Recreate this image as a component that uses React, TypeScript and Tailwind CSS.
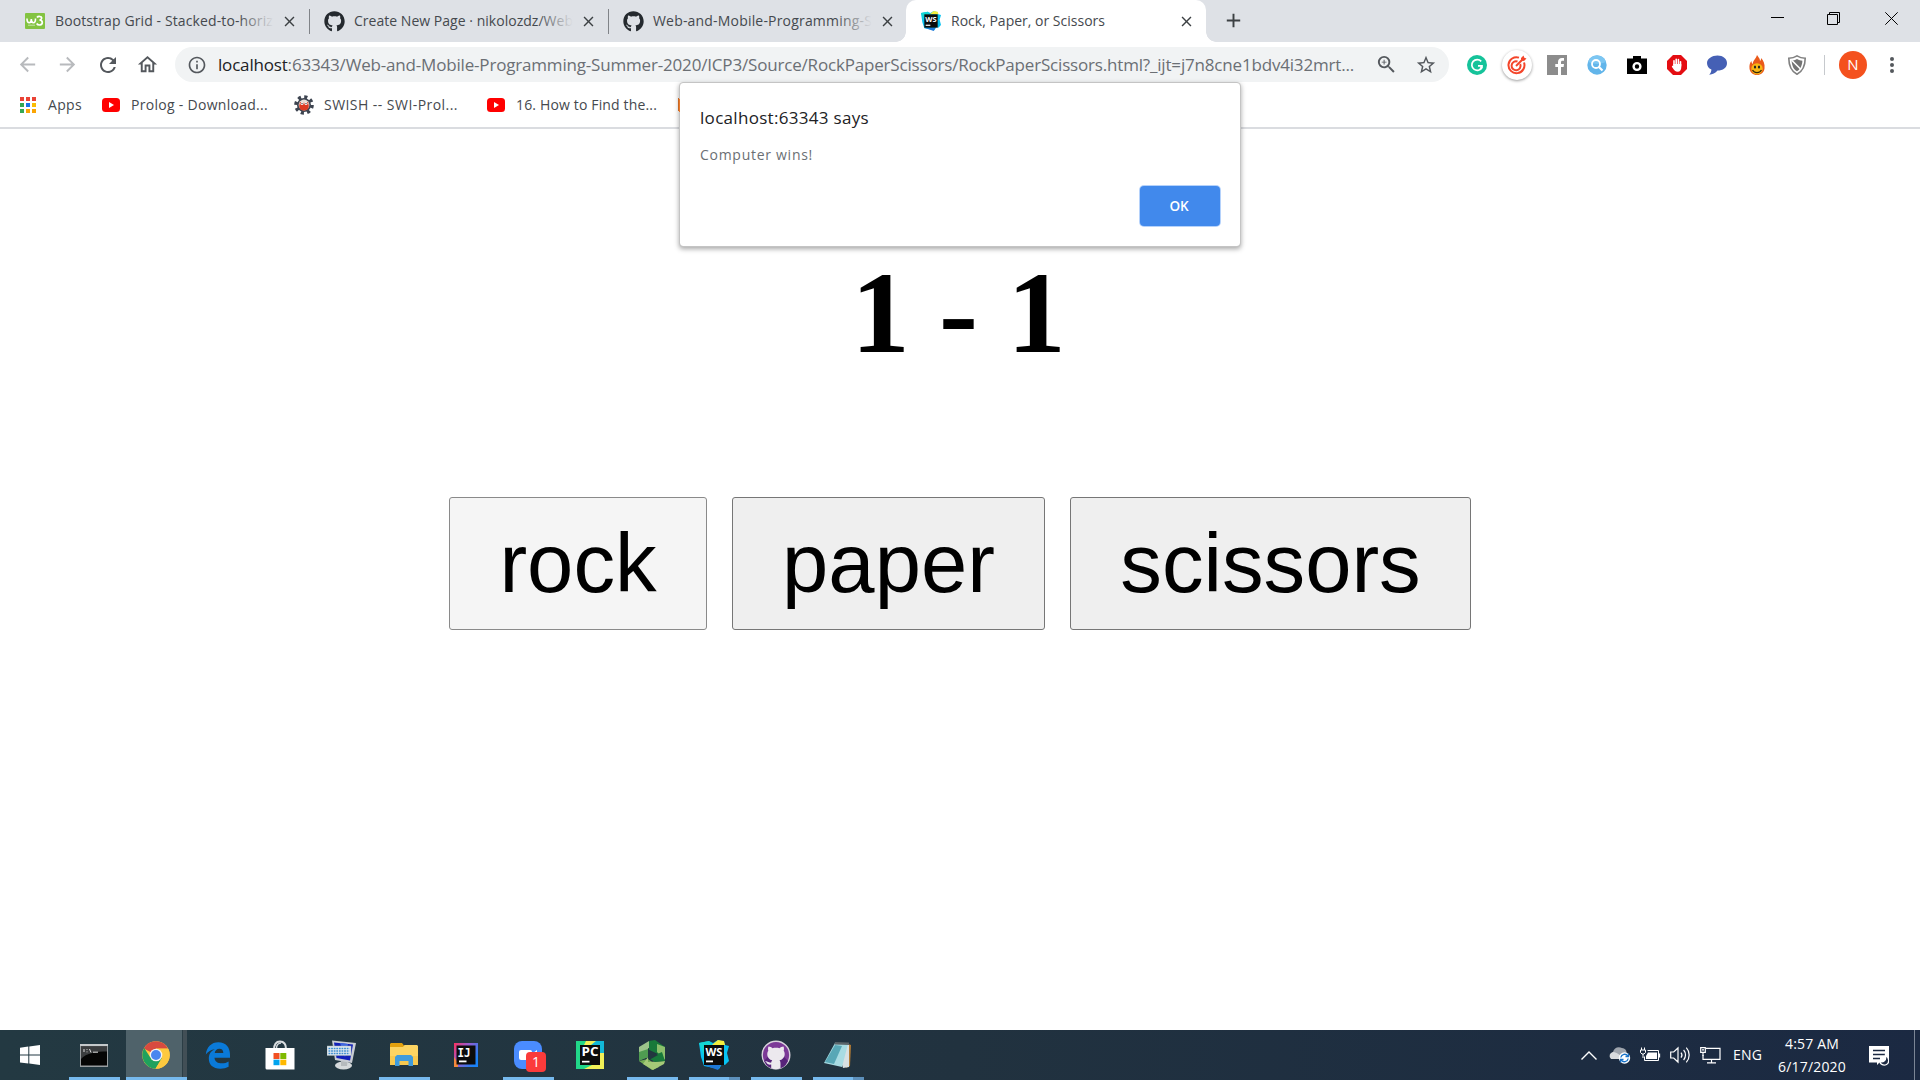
import { useLayoutEffect, useRef, useState, type ReactNode } from "react";
import { FaGithub } from "react-icons/fa";
import {
  MdArrowBack, MdArrowForward, MdRefresh, MdOutlineHome, MdInfoOutline,
  MdZoomIn, MdStarBorder, MdClose, MdAdd,
} from "react-icons/md";

/* Text run tracked to a fixed width. */
const Label = ({ w, className = "", children }: { w: number; className?: string; children: ReactNode }) => {
  const ref = useRef<HTMLSpanElement>(null);
  const [sp, setSp] = useState(0);
  useLayoutEffect(() => {
    const el = ref.current;
    if (!el) return;
    const n = el.textContent?.length ?? 1;
    setSp((w - el.getBoundingClientRect().width) / n);
  }, [w]);
  return (
    <span ref={ref} className={`inline-block whitespace-nowrap ${className}`} style={{ letterSpacing: `${sp}px` }}>
      {children}
    </span>
  );
};

const W3 = () => (
  <svg width="20" height="16" viewBox="0 0 20 16">
    <rect width="20" height="16" rx="1" fill="#83c341" />
    <path d="M2 5.500c0 3 .8 4.200 2.300 4.200S6.300 8.500 6.300 6c0 2.500.7 3.700 2.200 3.700S10.500 8 10.500 5.500" fill="none" stroke="#fff" strokeWidth="1.600" />
    <path d="M12 4.500c1-1.500 5-1.500 4.600.8-.2 1.300-1.200 1.700-2.200 1.700 1.500 0 2.900.6 2.900 2.500 0 3-4.300 3.200-5.600 1" fill="none" stroke="#fff" strokeWidth="1.700" />
    <path d="M3 12.200h7" stroke="#c9e6a8" strokeWidth="1" />
  </svg>
);

const WebStorm = ({ size }: { size: number }) => (
  <svg width={size} height={size} viewBox="0 0 30 30">
    <path d="M0 3l10-2 4 2 5-3 6 2 1 3 4 1-2 7 2 8-4 4-3-1-3 5-15-3L2 17z" fill="#07c3f2" />
    <path d="M5 25l14 5 3-5z" fill="#1e78d8" />
    <path d="M14 4l5-4 6 1 1 4H13z" fill="#f5ee3c" />
    <path d="M0 3l10-2 3 4-8 3v8z" fill="#14d6d2" />
    <rect x="5" y="5" width="20" height="20" fill="#0b0b0b" />
    <text x="15" y="16" textAnchor="middle" fontFamily="Open Sans, sans-serif" fontWeight="700" fontSize="10.500" textLength="17" lengthAdjust="spacingAndGlyphs" fill="#fff">WS</text>
    <rect x="7" y="20.500" width="7" height="1.800" fill="#fff" />
  </svg>
);

type TabProps = { icon: ReactNode; title: string; w: number; fade?: boolean; active?: boolean; last?: boolean };
const tabTitle = "text-[14px] leading-5 text-[#45494e]";

const Tab = ({ icon, title, w, fade, active, last }: TabProps) => (
  <div className={`relative flex h-[42px] shrink-0 items-center ${active ? "w-[300px] rounded-t-[10px] bg-white pl-[15px]" : "w-[299px] pl-[14px]"}`}>
    {active && (
      <>
        <span className="absolute bottom-0 -left-[10px] size-[10px] bg-[radial-gradient(circle_at_0_0,transparent_9.500px,#fff_10px)]" />
        <span className="absolute -right-[10px] bottom-0 size-[10px] bg-[radial-gradient(circle_at_100%_0,transparent_9.500px,#fff_10px)]" />
      </>
    )}
    <span className="flex w-[21px] justify-start">{icon}</span>
    <span className={`relative ml-[9px] flex pb-px ${active ? "w-[220px]" : "w-[219px]"}`}>
      <Label w={w} className={tabTitle}>{title}</Label>
      {fade && <span className="absolute inset-y-0 right-0 w-[36px] bg-gradient-to-r from-transparent to-[#dee1e6]" />}
    </span>
    <MdClose className={`shrink-0 text-[#3c4043] ${active ? "ml-[7px]" : "ml-[7px]"}`} size={17} />
    {!active && !last && <span className="ml-auto h-[25px] w-px bg-[#808388]" />}
  </div>
);

const Extension = ({ children }: { children: ReactNode }) => (
  <span className="flex w-10 items-center justify-center">{children}</span>
);

const GrammarlyIcon = () => (
  <svg width="20" height="20" viewBox="0 0 20 20">
    <circle cx="10" cy="10" r="10" fill="#15c39a" />
    <path d="M14.200 6.300A5.400 5.400 0 1 0 15 12.500v-1.700h-4M15 10.800l-1.700 3.200" fill="none" stroke="#fff" strokeWidth="1.700" />
  </svg>
);
const TargetIcon = () => (
  <span className="flex size-[30px] items-center justify-center rounded-full bg-white shadow-[0_1px_3px_rgba(0,0,0,0.4)]">
    <svg width="20" height="20" viewBox="0 0 20 20" fill="none" stroke="#f4452a" strokeWidth="2">
      <path d="M17 7.500A8 8 0 1 1 12 2.600" />
      <path d="M13.200 9A4.500 4.500 0 1 1 10.500 6.500" />
      <path d="M9 11l7-7" />
      <path d="M14 5.500V3l2.500-2.500.8 2.200 2.200.8L17 6z" fill="#f4452a" stroke="none" />
    </svg>
  </span>
);
const FacebookIcon = () => (
  <svg width="20" height="20" viewBox="0 0 20 20">
    <rect width="20" height="20" fill="#8c8c8c" />
    <path d="M11 20v-8H8.300V9H11V7c0-2.800 1.600-4 4-4h2v2.800h-1.500c-1.200 0-1.500.6-1.500 1.600V9h3l-.4 3H14v8z" fill="#fff" />
  </svg>
);
const SearchExtIcon = () => (
  <svg width="20" height="20" viewBox="0 0 20 20">
    <circle cx="10" cy="10" r="9.700" fill="#62b5ea" />
    <path d="M1 7a9.500 9.500 0 0 1 18 0c-5 2-10 3-18 0z" fill="#7cc6f2" />
    <circle cx="9" cy="9" r="4" fill="none" stroke="#fff" strokeWidth="1.800" />
    <path d="M12 12l3.500 3.500" stroke="#fff" strokeWidth="2.200" />
  </svg>
);
const CameraIcon = () => (
  <svg width="20" height="20" viewBox="0 0 20 20">
    <path d="M6 1h8v2.500h6v15.500H0V3.500h6z" fill="#000" />
    <circle cx="10" cy="11.500" r="3.400" fill="none" stroke="#fff" strokeWidth="2.400" />
  </svg>
);
const AdblockIcon = () => (
  <svg width="20" height="20" viewBox="0 0 20 20">
    <path d="M6 0h8l6 6v8l-6 6H6l-6-6V6z" fill="#e40d12" />
    <path d="M7 10V5.700M9.200 9V4.200M11.400 9V4.600M13.500 11V6.800" stroke="#fff" strokeWidth="1.600" strokeLinecap="round" />
    <path d="M6.200 9h8.100v3c0 3-1.300 4.800-3.600 4.800-2.400 0-3.300-1.600-5.700-4.900-.4-.7.400-1.400 1.200-.9z" fill="#fff" />
  </svg>
);
const BubbleIcon = () => (
  <svg width="20" height="20" viewBox="0 0 20 20">
    <path d="M10.500.4C16 .4 20 3.600 20 8c0 4.600-4 7.600-9.500 7.600-2 2.600-5 4-8.300 4.200 1.500-1.600 2.200-3.400 2.200-5.200C1.600 13.200 0 11 0 8 0 3.600 5 .4 10.500.4z" fill="#4560b5" />
  </svg>
);
const FlameIcon = () => (
  <svg width="20" height="20" viewBox="0 0 20 20">
    <path d="M10 0c1 2 3 3 3 6 .7-.5 1.200-1.500 1-3 2.500 2.500 4 6 3.500 10.500C17 17.500 14 20 10 20s-7-2.500-7.500-6.500C2.200 10 3 7.500 4.500 6c0 1.500.4 2.300 1.200 3C6 5 9 4 10 0z" fill="#ea5a1a" />
    <ellipse cx="10" cy="13.800" rx="5.700" ry="5.600" fill="#f9b715" />
    <ellipse cx="8" cy="12" rx="1.100" ry="1.500" fill="#222" />
    <ellipse cx="12" cy="12" rx="1.100" ry="1.500" fill="#222" />
    <path d="M5.500 15c2 3.500 7 3.500 9 0" fill="none" stroke="#33240a" strokeWidth="1.200" />
  </svg>
);
const ShieldIcon = () => (
  <svg width="20" height="20" viewBox="0 0 20 20">
    <path d="M10 .8c2.500 1.600 5 2.300 8.200 2.400C18.200 11 16 16 10 19.300 4 16 1.800 11 1.800 3.200 5 3.100 7.500 2.400 10 .8z" fill="#fff" stroke="#808080" strokeWidth="1.600" />
    <path d="M10 4c2 1 3.500 1.500 5.400 1.700C15 11 13.500 14 10 16.300 6.500 14 5 11 4.600 5.700 6.500 5.500 8 5 10 4z" fill="#737373" />
    <path d="M5 5.500l9 9" stroke="#fff" strokeWidth="1.600" />
  </svg>
);

const appColors = [
  "bg-[#ea4335]", "bg-[#ea4335]", "bg-[#ea4335]",
  "bg-[#34a853]", "bg-[#1a73e8]", "bg-[#fbbc04]",
  "bg-[#34a853]", "bg-[#fba504]", "bg-[#fba504]",
];

const SwishIcon = () => (
  <svg width="20" height="20" viewBox="0 0 20 20">
    <circle cx="10" cy="10" r="8" fill="none" stroke="#3d4450" strokeWidth="3.600" strokeDasharray="3.100 3.180" />
    <circle cx="10" cy="10" r="7" fill="#3d4450" />
    <circle cx="10" cy="10" r="5.400" fill="#e9dfd6" />
    <path d="M6 7l4 1 4-1 .8 4c0 3-2 4.500-4.800 4.500S5.200 14 5.200 11z" fill="#dc3a22" />
    <circle cx="8" cy="8.600" r="1.500" fill="#fff" /><circle cx="12" cy="8.600" r="1.500" fill="#fff" />
    <circle cx="8" cy="8.600" r=".7" fill="#222" /><circle cx="12" cy="8.600" r=".7" fill="#222" />
  </svg>
);

const YouTube = () => (
  <svg width="18" height="14" viewBox="0 0 18 14">
    <rect width="18" height="14" rx="3.500" fill="#f00" />
    <path d="M7 4l5 3-5 3z" fill="#fff" />
  </svg>
);

const bookmarkText = "text-[14px] leading-5 text-[#45494e]";

/* Taskbar drawings */
const StartIcon = () => (
  <svg width="20" height="20" viewBox="0 0 20 20" fill="#fff">
    <path d="M0 2.700L8.300 1.600v8H0zM9.300 1.400L20 0v9.600H9.300zM0 10.500h8.300v8L0 17.400zM9.300 10.500H20V20L9.300 18.600z" />
  </svg>
);
const CmdIcon = () => (
  <svg width="28" height="23" viewBox="0 0 28 23">
    <rect width="28" height="23" fill="#989da0" />
    <rect y="0" width="28" height="2" fill="#c5c9cb" />
    <rect x="1" y="2.500" width="26" height="19" fill="#050505" />
    <path d="M1 2.500h26v5C17 7.500 6 9 1 15z" fill="#3b3d3f" />
    <path d="M4 5v3M7 5.200v.8M7 7.500v.8M9.500 5l1.500 3.500M13 8.200h5" stroke="#ddd" strokeWidth="1" fill="none" />
  </svg>
);
const ChromeIcon = () => (
  <svg width="28" height="28" viewBox="0 0 28 28">
    <circle cx="14" cy="14" r="13.800" fill="#fdc93f" />
    <path d="M14 14L1.800 7.500A13.800 13.800 0 0 1 26 7.500H14z" fill="#d84a3f" />
    <path d="M2.200 7A13.800 13.800 0 0 0 13.500 27.800L20 17 14 14 8 16z" fill="#1fa15d" />
    <path d="M20 17l-6.500 10.800A13.800 13.800 0 0 0 26.200 7.800H14z" fill="#fdc93f" />
    <circle cx="14" cy="14" r="6.300" fill="#f4f4f4" />
    <circle cx="14" cy="14" r="5" fill="#4a86ef" />
  </svg>
);
const EdgeIcon = () => (
  <svg width="26" height="27" viewBox="0 0 26 27">
    <path d="M.8 12.500C1.600 5 6.600.2 13.300.2 21 .2 25 5.500 25 12.500v3.200H9.500c.2 4 3.400 5.600 7.300 5.600 2.600 0 5-.7 6.800-1.900v5.300c-2.200 1.300-5.200 2-8.300 2C8 26.700 3.800 22.400 3.800 16.400c0-4.200 2.200-7.600 6-9.200C6 7.600 3 9.400.8 12.500zM9.700 11h8.600c0-2.800-1.300-4.300-4-4.300-2.500 0-4.200 1.700-4.600 4.300z" fill="#0a7ad9" />
  </svg>
);
const StoreIcon = () => (
  <svg width="30" height="30" viewBox="0 0 30 30">
    <path d="M9 10C9 4 11.500 1.500 15 1.500S21 4 21 9" fill="none" stroke="#d9dde0" strokeWidth="2" />
    <path d="M11.500 8c0-3 2-5 4.500-5" fill="none" stroke="#d9dde0" strokeWidth="1.400" />
    <path d="M.5 8h29v21.500H2a1.500 1.500 0 0 1-1.500-1.500z" fill="#fff" />
    <rect x="8.500" y="13" width="6" height="6" fill="#f25022" /><rect x="15.300" y="13" width="6" height="6" fill="#7fba00" />
    <rect x="8.500" y="19.700" width="6" height="5.500" fill="#00a4ef" /><rect x="15.300" y="19.700" width="6" height="5.500" fill="#ffb900" />
  </svg>
);
const KeyboardPcIcon = () => (
  <svg width="30" height="30" viewBox="0 0 30 30">
    <ellipse cx="16.500" cy="25.500" rx="8.500" ry="4" fill="#d5d9db" />
    <path d="M14 18h7l-1 8h-6z" fill="#b5babd" />
    <path d="M5 .5L29 3l-4 20L8 20z" fill="#c9cdd4" />
    <path d="M7 2.500L26 4.500l-3 16L9.500 18z" fill="#1320b8" />
    <path d="M13 3l8 1-3 13z" fill="#3f68e4" />
    <rect x="0" y="6" width="24" height="9.500" fill="#e3eaf0" stroke="#9aa" strokeWidth=".5" />
    <path d="M1.500 8.500h21M1.500 11h21M1.500 13.500h21" stroke="#3e8ed0" strokeWidth="1.600" strokeDasharray="1.800 .8" />
  </svg>
);
const ExplorerIcon = () => (
  <svg width="28" height="24" viewBox="0 0 28 24">
    <path d="M1 0h11l2 2.500V6H0V1z" fill="#e3a10e" />
    <path d="M0 4h13l1.500-2H27l1 1v19H0z" fill="#fcd462" />
    <path d="M0 13h28v9H0z" fill="#f7c94f" />
    <path d="M5 23V14l2-2h14l2 2v9h-4.500v-5h-9v5z" fill="#3f9bdc" />
  </svg>
);
const IntelliJIcon = () => (
  <svg width="24" height="24" viewBox="0 0 24 24">
    <defs><linearGradient id="ij" x1="0" y1="0" x2="1" y2=".6"><stop offset="0" stopColor="#fc315d" /><stop offset=".45" stopColor="#9a5bd0" /><stop offset="1" stopColor="#1a82f7" /></linearGradient></defs>
    <rect width="24" height="24" fill="url(#ij)" />
    <path d="M0 14l4 6v4H0z" fill="#f6893c" />
    <rect x="2.500" y="2.500" width="19" height="19" fill="#0c0c0c" />
    <text x="3.500" y="13.500" fontFamily="DejaVu Sans Mono, monospace" fontWeight="700" fontSize="12" textLength="13" lengthAdjust="spacingAndGlyphs" fill="#fff">IJ</text>
    <rect x="5" y="17.500" width="7.500" height="1.800" fill="#fff" />
  </svg>
);
const ZoomIcon = () => (
  <span className="relative flex">
    <svg width="28" height="28" viewBox="0 0 28 28">
      <rect width="28" height="28" rx="8" fill="#4a8cff" />
      <rect x="5" y="9" width="13" height="10" rx="2" fill="#fff" />
      <path d="M19 12l4-3v10l-4-3z" fill="#fff" />
    </svg>
    <span className="absolute -right-[4px] -bottom-[3px] flex size-[20px] items-center justify-center rounded-[4px] bg-[#fb3b3b] text-[14px] leading-none text-white">1</span>
  </span>
);
const PyCharmIcon = () => (
  <svg width="28" height="28" viewBox="0 0 28 28">
    <rect width="28" height="28" fill="#21d789" />
    <path d="M12 0h16v16z" fill="#12b8d8" />
    <path d="M10 0h10l-5 4H8zM28 12v16H8l12-6 4-10z" fill="#f2f057" />
    <rect x="4" y="4" width="20" height="20" fill="#0c0c0c" />
    <text x="5.500" y="15" fontFamily="Open Sans, sans-serif" fontWeight="700" fontSize="11.500" textLength="17" lengthAdjust="spacingAndGlyphs" fill="#fff">PC</text>
    <rect x="6" y="19.800" width="7.500" height="1.700" fill="#fff" />
  </svg>
);
const HexIcon = () => (
  <svg width="28" height="30" viewBox="0 0 28 30">
    <path d="M11 1L1 7v13l9-3V8l8 3z" fill="#9cc48a" />
    <path d="M1 12v9l9-4V9z" fill="#4f9b51" />
    <path d="M11 1l6-1 10 7v14l-7-7-9-4z" fill="#18793a" />
    <path d="M19 4l8 3v13l-8-8z" fill="#8cbf6c" />
    <path d="M1 21l13 9 7-3-11-8z" fill="#75ad55" />
    <path d="M10 17v5l17-1-1 3-11 6-10-6z" fill="#a5c977" />
    <path d="M10 18l14-6 3 9-10 1z" fill="#18793a" />
    <path d="M11 10l9 5-9 5z" fill="#22373f" />
  </svg>
);
const GitHubDesktopIcon = () => (
  <svg width="30" height="30" viewBox="0 0 30 30">
    <circle cx="15" cy="15" r="13.800" fill="#7c3a97" stroke="#d9d4dd" strokeWidth="1.400" />
    <path d="M3 21a13 13 0 0 0 24 0L15 8z" fill="#57247a" />
    <path d="M7.500 6.500c1.500 0 3 .8 4 1.700 2-.5 5-.5 7 0 1-.9 2.500-1.700 4-1.700.6 1.500.6 3 .2 4.200C24.500 13 24.300 19 18.500 20.300c.8 1 1 2 1 3.700v4.300c-3 1.200-6.500 1.200-9.300 0v-3.800c-4 .8-4-2-6-3 2-.8 3.500 1.700 6 1 .1-1 .5-1.700 1-2.200C5.700 19 5.500 13 7.300 10.700c-.4-1.200-.4-2.700.2-4.200z" fill="#ece9ee" />
  </svg>
);
const NotepadIcon = () => (
  <svg width="28" height="28" viewBox="0 0 28 28">
    <path d="M24 3l3 1-1 21-4 2z" fill="#b27b35" />
    <path d="M12 3l13-1v24l-6 1z" fill="#d8e0e2" />
    <path d="M11 2l13 1-6 23-18-4z" fill="#a8dbe2" />
    <path d="M11 4l7 1-8 18-9-2z" fill="#58a7b6" />
    <path d="M11 1l14 .5v2.500L10.500 3.500z" fill="#5b656a" />
  </svg>
);

type Task = { icon: ReactNode; open?: boolean; multi?: boolean; active?: boolean };
const tasks: Task[] = [
  { icon: <CmdIcon />, open: true },
  { icon: <ChromeIcon />, active: true },
  { icon: <EdgeIcon /> },
  { icon: <StoreIcon /> },
  { icon: <KeyboardPcIcon /> },
  { icon: <ExplorerIcon />, open: true },
  { icon: <IntelliJIcon /> },
  { icon: <ZoomIcon />, open: true },
  { icon: <PyCharmIcon /> },
  { icon: <HexIcon />, open: true },
  { icon: <WebStorm size={30} />, open: true, multi: true },
  { icon: <GitHubDesktopIcon />, open: true },
  { icon: <NotepadIcon />, open: true, multi: true },
];

const TaskItem = ({ icon, open, multi, active }: Task) => (
  <div className="relative flex h-[50px] w-[62px] shrink-0 items-center justify-center">
    {active && (
      <span className="absolute inset-y-0 left-[2px] flex w-[61px] border-b-[3px] border-[#76b9ed]">
        <span className="flex-1 bg-[#4f626a]" />
        <span className="w-px bg-[#2b3d45]" />
        <span className="w-[4px] bg-[#424f56]" />
      </span>
    )}
    <span className="relative flex pl-[2px]">{icon}</span>
    {open && (
      <span className="absolute bottom-0 left-[7px] flex h-[3px] w-[51px] bg-[#76b9ed]">
        {multi && <span className="ml-auto w-[11px] bg-[#5d90bb]" />}
      </span>
    )}
  </div>
);

const CloudIcon = () => (
  <svg width="22" height="20" viewBox="0 0 22 20">
    <path d="M4 14a4 4 0 0 1 0-7c1-4 5-6 9-4 3 .2 4.500 2 4.500 4.500V14z" fill="#9fa5ad" />
    <path d="M2 14a4 4 0 0 1 2-7c4 0 8 4 12 7z" fill="#d8dbde" />
    <circle cx="15.500" cy="13" r="5.700" fill="#fff" />
    <path d="M11.800 12.500a3.900 3.900 0 0 1 7-1.600M19.200 13.500a3.900 3.900 0 0 1-7 1.600M19.500 8.500v3h-3M11.500 17.500v-3h3" fill="none" stroke="#1a73c8" strokeWidth="1.300" />
  </svg>
);
const BatteryIcon = () => (
  <svg width="21" height="16" viewBox="0 0 21 16">
    <path d="M7.500 3.500H18.500v10H4.500V9.500" fill="none" stroke="#fff" strokeWidth="1" />
    <path d="M8 5.500h9v6.500H6V9z" fill="#fff" />
    <path d="M19.500 6.500v4" stroke="#fff" strokeWidth="1.300" />
    <path d="M1.500.5v2.500M4.500.5v2.500M3 7v4" stroke="#fff" strokeWidth="1" />
    <path d="M.5 3h5v2.500L4 7H2L.5 5.500z" fill="none" stroke="#fff" />
  </svg>
);
const VolumeIcon = () => (
  <svg width="21" height="18" viewBox="0 0 21 18" fill="none" stroke="#fff" strokeWidth="1.200">
    <path d="M.7 6h3L8 2v14l-4.300-4h-3zM11 6.500a4 4 0 0 1 0 5M13.600 4a7.500 7.500 0 0 1 0 10M16.300 1.600a11 11 0 0 1 0 14.800" />
  </svg>
);
const NetworkIcon = () => (
  <svg width="21" height="17" viewBox="0 0 21 17" fill="none" stroke="#fff" strokeWidth="1.200">
    <path d="M6 1.300h14v11H3V8M11.500 12v3.500M7 15.800h9" />
    <path d="M.7.700h4.600v4.600H.7zM3 5v4M2 2.800h2" />
  </svg>
);
const NotificationIcon = () => (
  <svg width="20" height="21" viewBox="0 0 20 21">
    <path d="M0 0h20v16h-9l-3 3v-2.500H0z" fill="#fff" />
    <path d="M4 4.500h12M4 8.500h12M4 12.500h7" stroke="#1c2942" strokeWidth="1.500" />
    <path d="M16.500 9.500c1 5-2 7-6 6 1 3 4 4.500 7 3 3-1.500 3.200-7-1-9z" fill="#1c2942" stroke="#fff" strokeWidth="1.300" />
  </svg>
);

const choices = [
  { name: "rock", cls: "w-[258px] border-[#8a8a8a] bg-[#f5f5f5]" },
  { name: "paper", cls: "w-[313px] border-[#767676] bg-[#efefef]" },
  { name: "scissors", cls: "w-[401px] border-[#767676] bg-[#efefef]" },
];

export default function App() {
  return (
    <div className="relative flex h-[1080px] w-[1924px] flex-col overflow-hidden bg-white pr-[4px] font-['Open_Sans','Noto_Sans',sans-serif]">
      <header className="flex h-[42px] shrink-0 bg-[#dee1e6] pl-[11px]">
        <Tab icon={<W3 />} title="Bootstrap Grid - Stacked-to-horiz" w={218} fade />
        <Tab icon={<FaGithub size={21} color="#24292e" />} title="Create New Page · nikolozdz/Web" w={219} fade />
        <Tab icon={<FaGithub size={21} color="#24292e" />} title="Web-and-Mobile-Programming-S" w={219} fade last />
        <div className="-ml-[2px] flex">
          <Tab icon={<WebStorm size={20} />} title="Rock, Paper, or Scissors" w={154} active />
        </div>
        <MdAdd size={23} className="mt-[9px] ml-[16px] text-[#3c4043]" />
        <div className="mr-[22px] ml-auto flex items-start pt-[12px]">
          <span className="mt-[5px] mr-[43px] h-px w-[13px] bg-black" />
          <svg className="mr-[45px]" width="13" height="13" viewBox="0 0 13 13" fill="none" stroke="#000"><path d="M.5 2.500h10v10H.5zM2.500 2.500v-2h10v10h-2" /></svg>
          <svg width="13" height="13" viewBox="0 0 13 13" fill="none" stroke="#000"><path d="M.3.300l12.400 12.400M12.700.3L.3 12.700" /></svg>
        </div>
      </header>

      <div className="flex h-[45px] shrink-0 items-center pl-[16px]">
        <MdArrowBack size={23} className="text-[#b8babd]" />
        <MdArrowForward size={23} className="ml-[17px] text-[#b8babd]" />
        <MdRefresh size={24} className="ml-[17px] text-[#54585d]" />
        <MdOutlineHome size={23} className="ml-[16px] text-[#54585d]" />
        <div className="ml-[16px] flex h-[35px] w-[1274px] items-center rounded-full bg-[#f1f3f4]">
          <MdInfoOutline size={20} className="ml-[12px] text-[#54585d]" />
          <Label w={1136} className="ml-[11px] text-[17px] leading-6 text-[#6b6f74]">
            <span className="text-[#202124]">localhost</span>:63343/Web-and-Mobile-Programming-Summer-2020/ICP3/Source/RockPaperScissors/RockPaperScissors.html?_ijt=j7n8cne1bdv4i32mrt...
          </Label>
          <MdZoomIn size={23} className="ml-auto text-[#54585d]" />
          <MdStarBorder size={22} className="mr-[12px] ml-[17px] text-[#54585d]" />
        </div>
        <div className="ml-[8px] flex">
          <Extension><GrammarlyIcon /></Extension>
          <Extension><TargetIcon /></Extension>
          <Extension><FacebookIcon /></Extension>
          <Extension><SearchExtIcon /></Extension>
          <Extension><CameraIcon /></Extension>
          <Extension><AdblockIcon /></Extension>
          <Extension><BubbleIcon /></Extension>
          <Extension><FlameIcon /></Extension>
          <Extension><ShieldIcon /></Extension>
        </div>
        <span className="ml-[7px] h-[20px] w-px bg-[#c6c9cd]" />
        <span className="ml-[14px] flex size-[28px] items-center justify-center rounded-full bg-[#f4511e] text-[15px] text-white">N</span>
        <span className="ml-[23px] flex flex-col gap-[2px]">
          <span className="size-1 rounded-full bg-[#54585d]" />
          <span className="size-1 rounded-full bg-[#54585d]" />
          <span className="size-1 rounded-full bg-[#54585d]" />
        </span>
      </div>

      <nav className="flex h-[42px] shrink-0 items-center border-b-2 border-[#dadce0] pb-[5px] pl-[20px]">
        <span className="grid grid-cols-3 gap-x-[2px] gap-y-[2px]">
          {appColors.map((c, i) => <span key={i} className={`h-[4px] w-[4px] ${c}`} />)}
        </span>
        <Label w={34} className={`ml-[12px] ${bookmarkText}`}>Apps</Label>
        <span className="ml-[20px]"><YouTube /></span>
        <Label w={137} className={`ml-[11px] ${bookmarkText}`}>Prolog - Download...</Label>
        <span className="ml-[26px]"><SwishIcon /></span>
        <Label w={134} className={`ml-[10px] ${bookmarkText}`}>SWISH -- SWI-Prol...</Label>
        <span className="ml-[29px]"><YouTube /></span>
        <Label w={141} className={`ml-[11px] ${bookmarkText}`}>16. How to Find the...</Label>
        <span className="ml-[21px] h-[13px] w-[3px] bg-[#e8792b]" />
      </nav>

      <main className="flex flex-1 flex-col items-center">
        <h1 className="mt-[119px] mr-[3px] h-[130px] font-['Liberation_Serif',serif] text-[117px] leading-[130px] font-bold whitespace-pre text-black">1 - 1</h1>
        <div className="mt-[119px] flex gap-[25px]">
          {choices.map((c) => (
            <button key={c.name} className={`flex h-[133px] items-center justify-center rounded-[3px] border pt-px font-['Liberation_Sans',sans-serif] text-[83.200px] leading-none text-black ${c.cls}`}>
              {c.name}
            </button>
          ))}
        </div>
      </main>

      <footer className="flex h-[50px] shrink-0 items-center bg-gradient-to-r from-[#233942] via-[#21323f] to-[#1b2942] text-white">
        <span className="flex w-[62px] justify-center pr-[2px]"><StartIcon /></span>
        {tasks.map((t, i) => <TaskItem key={i} {...t} />)}
        <div className="ml-auto flex h-full items-center">
          <svg width="16" height="9" viewBox="0 0 16 9" fill="none" stroke="#fff" strokeWidth="1.400"><path d="M.5 8.500L8 1l7.500 7.500" /></svg>
          <span className="ml-[12px]"><CloudIcon /></span>
          <span className="ml-[9px]"><BatteryIcon /></span>
          <span className="ml-[9px]"><VolumeIcon /></span>
          <span className="ml-[9px]"><NetworkIcon /></span>
          <Label w={29} className="ml-[12px] text-[14px] leading-5">ENG</Label>
          <span className="ml-[16px] flex w-[68px] flex-col items-center text-[14px] leading-[23px]">
            <Label w={54}>4:57 AM</Label>
            <Label w={68}>6/17/2020</Label>
          </span>
          <span className="mt-[3px] ml-[23px]"><NotificationIcon /></span>
          <span className="mr-[5px] ml-[25px] h-full w-px bg-[#7b8595]" />
        </div>
      </footer>

      <section className="absolute top-[82px] left-[679px] flex h-[165px] w-[562px] flex-col rounded-[4px] border border-[#c4c4c4] bg-white bg-clip-padding px-[20px] shadow-[0_2px_5px_rgba(0,0,0,0.35)]">
        <span className="absolute top-[16px] -left-px h-[13px] w-px bg-[#e8792b]" />
        <Label w={169} className="mt-[23px] self-start text-[17px] leading-6 text-[#202124]">localhost:63343 says</Label>
        <Label w={113} className="mt-[15px] self-start text-[14px] leading-5 text-[#6b6f74]">Computer wins!</Label>
        <button className="mt-[21px] flex h-[40px] w-[80px] shrink-0 items-center justify-center self-end rounded-[4px] bg-[#4189ec] pr-[2px] text-[13.500px] font-semibold text-white shadow-[0_0_0_1px_#b5d2fb]">OK</button>
      </section>
    </div>
  );
}
